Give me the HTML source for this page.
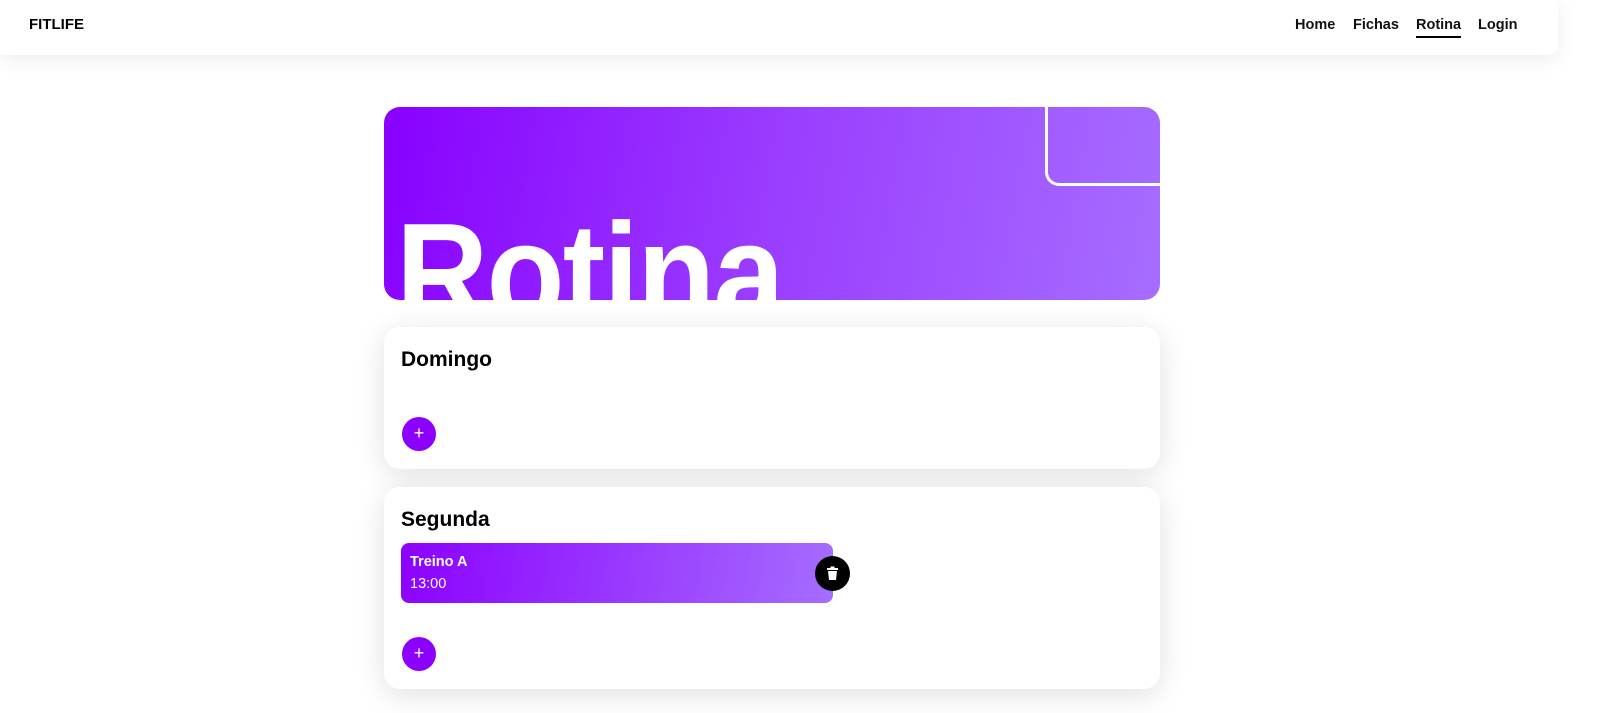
<!DOCTYPE html>
<html><head><style>
*{margin:0;padding:0;box-sizing:border-box}
body{width:1600px;height:713px;overflow:hidden;background:#fff;font-family:"Liberation Sans",sans-serif;position:relative}
.hdr{position:absolute;left:0;top:0;width:1558px;height:55px;background:#fff;border-radius:0 0 10px 0;box-shadow:0 4px 20px rgba(0,0,0,.08)}
.logo{position:absolute;left:29px;top:16px;font-weight:bold;font-size:15px;color:#000}
.nav{position:absolute;top:17px;font-size:14.5px;font-weight:bold;color:#111}
.banner{position:absolute;left:384px;top:107px;width:776px;height:193px;border-radius:16px;overflow:hidden;background:linear-gradient(100deg,#8800ff 0%,#9a3dff 50%,#a66dff 100%)}
.corner{position:absolute;left:661px;top:-10px;width:130px;height:89px;border-left:3px solid #fff;border-bottom:3px solid #fff;border-radius:0 0 0 14px}
.big{position:absolute;left:12px;top:96px;font-size:142px;font-weight:bold;color:#fff;letter-spacing:-2px;line-height:1;transform:scaleX(0.9);transform-origin:left top}
.card{position:absolute;left:384px;width:776px;background:#fff;border-radius:16px;box-shadow:0 6px 30px rgba(0,0,0,.12)}
.card h2{position:absolute;left:17px;top:21px;font-size:21px;font-weight:bold;color:#000}
.plus{position:absolute;left:18px;width:34px;height:34px;border-radius:50%;background:#8c00ff;color:#fff;font-size:18px;text-align:center;line-height:33px}
.item{position:absolute;left:17px;top:56px;width:432px;height:60px;border-radius:8px;background:linear-gradient(100deg,#8c00ff,#9a3dff 55%,#a66dff);color:#fff}
.trash{position:absolute;left:431px;top:69px;width:35px;height:35px;border-radius:50%;background:#000}
</style></head><body>
<div class="hdr"><div class="logo">FITLIFE</div>
<div class="nav" style="left:1295px">Home</div>
<div class="nav" style="left:1353px">Fichas</div>
<div class="nav" style="left:1416px">Rotina<div style="height:2px;background:#000;margin-top:3px"></div></div>
<div class="nav" style="left:1478px">Login</div></div>
<div class="banner"><div class="corner"></div><div class="big">Rotina</div></div>
<div class="card" style="top:327px;height:142px"><h2>Domingo</h2><div class="plus" style="top:90px">+</div></div>
<div class="card" style="top:487px;height:202px"><h2>Segunda</h2>
<div class="item"><div style="position:absolute;left:9px;top:11px;font-size:14.5px;font-weight:bold">Treino A</div><div style="position:absolute;left:9px;top:33px;font-size:14.5px">13:00</div></div>
<div class="trash"><svg width="35" height="35" viewBox="0 0 35 35"><rect x="12" y="12" width="11" height="2" fill="#fff"/><rect x="15.5" y="10.5" width="4" height="2" fill="#fff"/><path d="M13 15h9l-1 9h-7z" fill="#fff"/></svg></div>
<div class="plus" style="top:150px">+</div></div>
</body></html>
